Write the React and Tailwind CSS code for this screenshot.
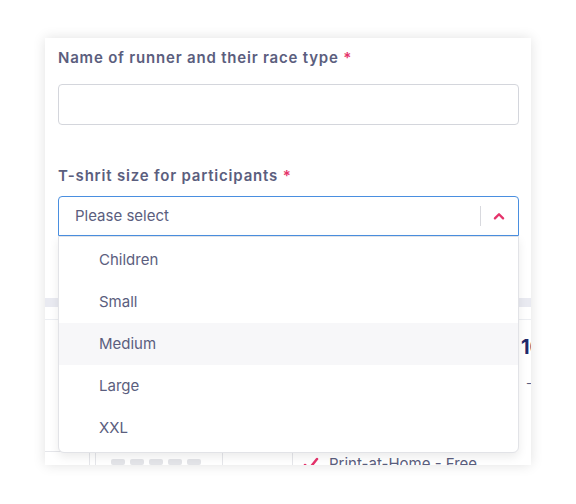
import React from "react"

const options = ["Children", "Small", "Medium", "Large", "XXL"]

export default function App() {
  return (
    <div className="relative w-[576px] h-[504px] bg-white overflow-hidden" style={{ fontFamily: "Inter, 'Open Sans', sans-serif" }}>
      {/* Form card */}
      <div className="ml-[45px] mt-[38px] w-[486px] h-[427px] bg-white shadow-[0_0_12px_rgba(0,0,0,0.12)] overflow-hidden flex flex-col">
        <div className="px-[13px] pt-[10px] h-[260px] shrink-0">
          <label className="block h-[20px] leading-[20px] text-[15px] font-semibold text-[#5b5e7e] tracking-[0.8px]">
            Name of runner and their race type <span className="text-[#e5336b]">*</span>
          </label>
          <div className="mt-[16px] h-[41px] w-[461px] border border-[#d4d6dc] rounded-[4px] bg-white" />
          <label className="block mt-[41px] h-[20px] leading-[20px] text-[15px] font-semibold text-[#5b5e7e] tracking-[0.8px]">
            T-shrit size for participants <span className="text-[#e5336b]">*</span>
          </label>
          <div className="mt-[10px] h-[40px] w-[461px] border border-[#4a8fe0] rounded-t-[4px] flex items-center pl-[16px] pr-[12px]">
            <span className="flex-1 text-[15px] text-[#5b5e7e]">Please select</span>
            <span className="w-px h-[20px] bg-[#d8d9de]" />
            <svg className="ml-[11px]" width="14" height="14" viewBox="0 0 24 24" fill="none" stroke="#e5336b" strokeWidth="4" strokeLinecap="round" strokeLinejoin="round">
              <path d="M5 16l7-7 7 7" />
            </svg>
          </div>
        </div>

        {/* Lower part of the page under the open menu */}
        <div className="h-[9px] bg-[#e9eaf1] shrink-0" />
        <div className="flex-1 flex border-t border-[#eceef2] mt-[12px]">
          <div className="w-[247px] flex flex-col justify-end">
            <div className="h-[14px] flex border-t border-[#e5e6ea]">
              <div className="w-[45px] border-r border-[#e5e6ea]" />
              <div className="w-[128px] ml-[5px] border-x border-[#e5e6ea] flex items-end gap-[5px] px-[15px]">
                {[0, 1, 2, 3, 4].map(i => (
                  <span key={i} className="w-[14px] h-[6px] rounded-[2px] bg-[#e3e4e8]" />
                ))}
              </div>
              <div className="flex-1 ml-[3px]" />
            </div>
          </div>
          <div className="flex-1 border-l border-[#e5e6ea] relative">
            <div className="absolute left-[228px] top-[12px] text-[20px] font-bold text-[#1f2a6b] whitespace-nowrap">10k</div>
            <div className="absolute left-[233px] top-[54px] text-[13px] text-[#5b5e7e]">-</div>
            <div className="absolute left-[10px] top-[133px] flex items-center gap-[10px] text-[15px] text-[#5b5e7e] whitespace-nowrap">
              <svg width="16" height="14" viewBox="0 0 16 14" fill="none" stroke="#e5336b" strokeWidth="2.5" strokeLinecap="round">
                <path d="M2 8l4 4L14 2" />
              </svg>
              Print-at-Home - Free
            </div>
          </div>
        </div>
      </div>

      {/* Open dropdown menu */}
      <div className="absolute left-[58px] top-[236px] w-[461px] bg-white border border-[#e2e3e7] rounded-b-[6px] shadow-[0_4px_10px_rgba(0,0,0,0.08)] pt-[2px] pb-[3px]">
        {options.map(o => (
          <div
            key={o}
            className={`h-[42px] flex items-center pl-[40px] text-[15px] text-[#5b5e7e] ${o === "Medium" ? "bg-[#f7f7f9]" : ""}`}
          >
            {o}
          </div>
        ))}
      </div>
    </div>
  )
}
